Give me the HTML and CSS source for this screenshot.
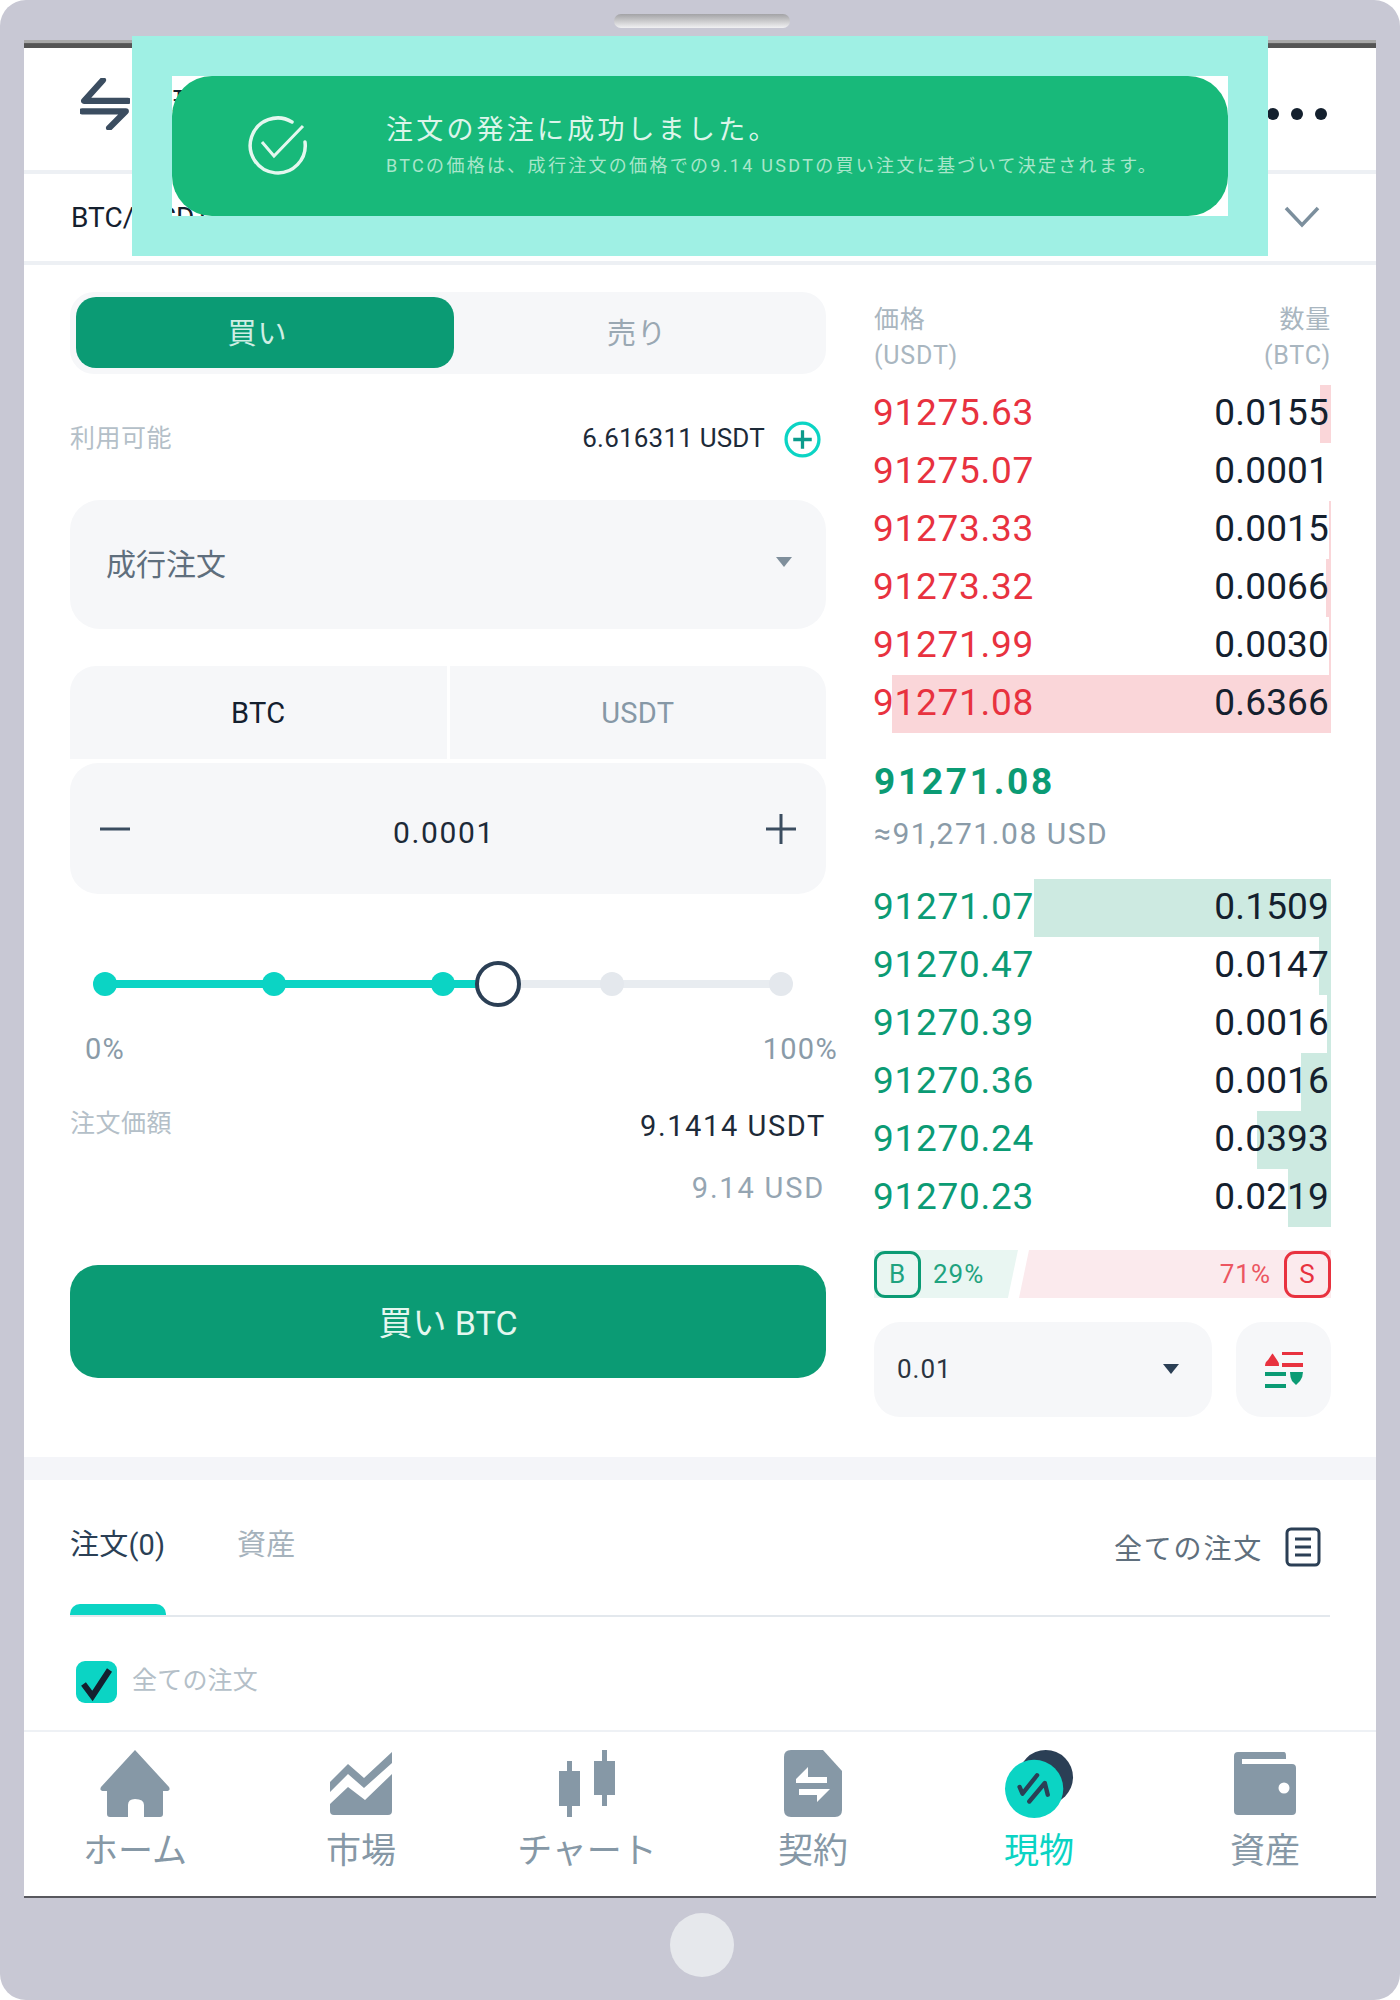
FILE: index.html
```html
<!DOCTYPE html>
<html lang="ja">
<head>
<meta charset="utf-8">
<title>現物注文</title>
<link rel="stylesheet" href="styles.css">
</head>
<body>
<div class="device">
  <div class="speaker"></div>
  <div class="screen">
    <div class="statusbar"></div>
    <header class="topbar">
      <svg class="swap-icon" viewBox="0 0 48 50" aria-hidden="true"><path d="M22 2 L4 22 H46 M2 32 H44 L28 48" fill="none" stroke="#3b4d60" stroke-width="6" stroke-linecap="round" stroke-linejoin="round"/></svg>
      <span class="top-title">現物</span>
      <div class="dots"><i></i><i></i><i></i></div>
    </header>
    <div class="pairbar">
      <span class="pair">BTC/ USDT</span>
      <svg class="chev" viewBox="0 0 36 22" aria-hidden="true"><path d="M2 2 L18 19 L34 2" fill="none" stroke="#7c8f9d" stroke-width="3.5"/></svg>
    </div>
    <main class="trade">
      <section class="form">
        <div class="side">
          <div class="side-btn on">買い</div>
          <div class="side-btn">売り</div>
        </div>
        <div class="balance">
          <span class="label">利用可能</span>
          <span class="bal-right">
            <span class="bal-val">6.616311 USDT</span>
            <svg class="plus-c" viewBox="0 0 36 36" aria-hidden="true"><circle cx="18" cy="18" r="16" fill="none" stroke="#0bd4c4" stroke-width="3.2"/><path d="M18 9 V27 M9 18 H27" stroke="#0b9b8c" stroke-width="3.2"/></svg>
          </span>
        </div>
        <div class="select">
          <span>成行注文</span>
          <i class="caret"></i>
        </div>
        <div class="unit">
          <div class="unit-btn on">BTC</div>
          <div class="unit-btn">USDT</div>
        </div>
        <div class="qty-input">
          <svg class="pm" viewBox="0 0 30 30" aria-hidden="true"><path d="M0 15 H30" stroke="#3b4d60" stroke-width="3"/></svg>
          <span>0.0001</span>
          <svg class="pm" viewBox="0 0 30 30" aria-hidden="true"><path d="M0 15 H30 M15 0 V30" stroke="#3b4d60" stroke-width="3"/></svg>
        </div>
        <div class="slider">
          <div class="track"><div class="track-fill"></div></div>
          <i class="dot on"></i><i class="dot on"></i><i class="dot on"></i><i class="dot"></i><i class="dot"></i>
          <i class="thumb"></i>
        </div>
        <div class="pct"><span>0%</span><span>100%</span></div>
        <div class="total">
          <span class="label total-label">注文価額</span>
          <span class="total-val">9.1414 USDT</span>
        </div>
        <div class="total-usd">9.14 USD</div>
        <div class="buy">買い BTC</div>
      </section>
      <section class="book">
        <div class="book-head">
          <div><div>価格</div><div>(USDT)</div></div>
          <div class="r"><div>数量</div><div>(BTC)</div></div>
        </div>
        <div class="rows">
          <div class="row ask"><i class="bar" style="width:11px"></i><span class="p">91275.63</span><span class="q">0.0155</span></div>
          <div class="row ask"><span class="p">91275.07</span><span class="q">0.0001</span></div>
          <div class="row ask"><i class="bar" style="width:2px"></i><span class="p">91273.33</span><span class="q">0.0015</span></div>
          <div class="row ask"><i class="bar" style="width:5px"></i><span class="p">91273.32</span><span class="q">0.0066</span></div>
          <div class="row ask"><i class="bar" style="width:2px"></i><span class="p">91271.99</span><span class="q">0.0030</span></div>
          <div class="row ask"><i class="bar" style="width:439px"></i><span class="p">91271.08</span><span class="q">0.6366</span></div>
        </div>
        <div class="last">91271.08</div>
        <div class="last-usd">≈91,271.08 USD</div>
        <div class="rows">
          <div class="row bid"><i class="bar" style="width:297px"></i><span class="p">91271.07</span><span class="q">0.1509</span></div>
          <div class="row bid"><i class="bar" style="width:12px"></i><span class="p">91270.47</span><span class="q">0.0147</span></div>
          <div class="row bid"><i class="bar" style="width:4px"></i><span class="p">91270.39</span><span class="q">0.0016</span></div>
          <div class="row bid"><i class="bar" style="width:30px"></i><span class="p">91270.36</span><span class="q">0.0016</span></div>
          <div class="row bid"><i class="bar" style="width:74px"></i><span class="p">91270.24</span><span class="q">0.0393</span></div>
          <div class="row bid"><i class="bar" style="width:43px"></i><span class="p">91270.23</span><span class="q">0.0219</span></div>
        </div>
        <div class="ratio">
          <div class="ratio-b"><b class="tag">B</b><span>29%</span></div>
          <div class="ratio-s"><span>71%</span><b class="tag">S</b></div>
        </div>
        <div class="book-tools">
          <div class="depth"><span>0.01</span><i class="caret dark"></i></div>
          <div class="sort">
            <svg viewBox="0 0 38 36" aria-hidden="true">
              <path d="M0 14 Q0 10 3 8 L7 2 Q7.500 1 8 2 L12 8 Q14 10 14 14 Z" fill="#e8323f"/>
              <path d="M17 1 H38 M17 13 H38" stroke="#e8323f" stroke-width="4"/>
              <path d="M0 22 H21 M0 34 H21" stroke="#0b9b74" stroke-width="4"/>
              <path d="M25 20 H38 Q38 25 35 29 L31 33 L27 29 Q25 25 25 20 Z" fill="#0b9b74"/>
            </svg>
          </div>
        </div>
      </section>
    </main>
    <div class="band"></div>
    <section class="orders">
      <div class="o-tabs">
        <div class="o-tab on"><span>注文(0)</span></div>
        <div class="o-tab"><span>資産</span></div>
        <div class="o-all">
          <span>全ての注文</span>
          <svg viewBox="0 0 36 40" aria-hidden="true"><rect x="2" y="2" width="32" height="36" rx="4" fill="none" stroke="#2b3f55" stroke-width="3"/><path d="M10 12 H26 M10 20 H26 M10 28 H26" stroke="#2b3f55" stroke-width="3"/></svg>
        </div>
      </div>
      <div class="o-filter">
        <span class="check"><svg viewBox="0 0 40 42" aria-hidden="true"><path d="M7 23 L16 35 L33 9" fill="none" stroke="#14202e" stroke-width="6"/></svg></span>
        <span class="filter-label">全ての注文</span>
      </div>
    </section>
    <nav class="nav">
      <div class="nav-item">
        <svg width="70" height="68" viewBox="0 0 70 68" aria-hidden="true"><path d="M35 0 L69 37 Q71 41 66 41 H63 V64 Q63 67 60 67 H44 V55 Q44 49 35 49 Q28 49 28 55 V67 H10 Q7 67 7 64 V41 H4 Q-1 41 1 37 Z" fill="#8698a6"/></svg>
        <span>ホーム</span>
      </div>
      <div class="nav-item">
        <svg width="62" height="64" viewBox="0 0 62 64" aria-hidden="true"><path d="M0 30 L18 12 L34 26 L62 0 V11 L34 36 L18 22 L0 40 Z M0 52 L18 35 L35 48 L62 22 V59 Q62 63 58 63 H4 Q0 63 0 59 Z" fill="#8698a6"/></svg>
        <span>市場</span>
      </div>
      <div class="nav-item">
        <svg width="56" height="68" viewBox="0 0 56 68" aria-hidden="true"><path d="M8 11 H13 V21 H21 V56 H13 V67 H8 V56 H0 V21 H8 Z M43 0 H48 V11 H56 V45 H48 V56 H43 V45 H35 V11 H43 Z" fill="#8698a6"/></svg>
        <span>チャート</span>
      </div>
      <div class="nav-item">
        <svg width="58" height="68" viewBox="0 0 58 68" aria-hidden="true"><path d="M7 0 H39 L58 21 V60 Q58 67 51 67 H7 Q0 67 0 60 V7 Q0 0 7 0 Z" fill="#8698a6"/><path d="M24 17 L12 29 V33 H43 V27 H24 Z M15 39 V45 H33 V52 L46 39 Z" fill="#fff"/></svg>
        <span>契約</span>
      </div>
      <div class="nav-item active">
        <svg width="70" height="70" viewBox="0 0 70 70" aria-hidden="true"><circle cx="42" cy="28" r="28" fill="#2b3f55"/><circle cx="30" cy="40" r="30" fill="#0bd4c4"/><path d="M15 38 L18 45 L33 26 M25 53 L41 34 L44 46" fill="none" stroke="#2b3f55" stroke-width="4.500" stroke-linecap="round" stroke-linejoin="round"/></svg>
        <span>現物</span>
      </div>
      <div class="nav-item">
        <svg width="62" height="64" viewBox="0 0 62 64" aria-hidden="true"><path d="M4 0 H50 Q52 0 52 4 V7 H8 V12 H58 Q62 12 62 16 V59 Q62 63 58 63 H4 Q0 63 0 59 V4 Q0 0 4 0 Z" fill="#8698a6"/><circle cx="50" cy="36" r="5.500" fill="#fff"/></svg>
        <span>資産</span>
      </div>
    </nav>
  </div>
  <div class="home"></div>
  <div class="toast">
    <div class="toast-pill">
      <svg class="toast-check" viewBox="0 0 60 60" aria-hidden="true"><path d="M44 6 A27.500 27.500 0 1 0 57 26" fill="none" stroke="#e4f7ef" stroke-width="3.500" stroke-linecap="round"/><path d="M14 26 L26 40 L55 10" fill="none" stroke="#e4f7ef" stroke-width="3"/></svg>
      <div class="toast-text">
        <div class="toast-title">注文の発注に成功しました。</div>
        <div class="toast-sub">BTCの価格は、成行注文の価格での9.14 USDTの買い注文に基づいて決定されます。</div>
      </div>
    </div>
  </div>
</div>
</body>
</html>
```
FILE: styles.css
```css
* { box-sizing: border-box; }
html, body { margin: 0; padding: 0; }
body { font-family: Roboto, "Noto Sans CJK JP", sans-serif; background: #fff; color: #14202e; }
i, b { font-style: normal; font-weight: 400; }

.device { position: relative; width: 1400px; height: 2000px; padding-top: 14px; background: #c8c8d4; border-radius: 26px; }
.speaker { width: 176px; height: 14px; margin-left: 614px; border-radius: 7px; background: linear-gradient(#a3a3a6, #f1f1f3); }
.screen { display: flex; flex-direction: column; height: 1858px; margin: 12px 24px 0; overflow: hidden; background: #fff; border-bottom: 2px solid #58585e; }
.statusbar { height: 8px; flex: none; background: linear-gradient(#a8a8a8, #a8a8a8 35%, #555 45%, #555); }
.home { width: 64px; height: 64px; margin: 15px 0 0 670px; border-radius: 50%; background: #e6e8ec; }

.topbar { display: flex; align-items: center; flex: none; height: 126px; padding: 0 49px 0 56px; border-bottom: 4px solid #edf0f4; }
.swap-icon { width: 50px; height: 52px; margin-bottom: 10px; }
.top-title { margin: 0 0 16px 42px; font-size: 30px; }
.dots { display: flex; gap: 12px; margin: 10px 0 0 auto; }
.dots i { width: 12px; height: 12px; border-radius: 50%; background: #14202e; }
.pairbar { display: flex; align-items: center; justify-content: space-between; flex: none; height: 91px; padding: 0 56px 1px 47px; border-bottom: 4px solid #edf0f4; }
.pair { font-size: 28px; }
.chev { width: 36px; height: 22px; }

.trade { display: flex; flex: none; height: 1192px; gap: 48px; padding: 27px 45px 0 46px; }
.form { width: 756px; flex: none; }
.book { flex: 1; min-width: 0; padding-top: 10px; }

.side { display: flex; height: 82px; padding: 5px 0 6px 6px; border-radius: 24px; background: #f6f7f9; }
.side-btn { display: flex; align-items: center; justify-content: center; flex: 1; padding-bottom: 3px; font-size: 29px; letter-spacing: 1px; color: #9aa8b3; }
.side-btn.on { flex: none; width: 378px; padding-right: 15px; border-radius: 20px; background: #0b9b74; color: #cfeee4; }
.side-btn:not(.on) { padding-right: 6px; }

.balance { display: flex; align-items: center; justify-content: space-between; height: 50px; margin: 39px 0 37px; padding-right: 5px; }
.label { margin-top: -5px; font-size: 25px; letter-spacing: .5px; color: #b4bfc8; }
.total-label { margin-top: -6px; }
.bal-right { display: flex; align-items: center; gap: 19px; }
.bal-val { font-size: 26px; letter-spacing: .2px; color: #1d2a38; }
.plus-c { width: 37px; height: 37px; margin-top: 3px; }

.select { display: flex; align-items: center; justify-content: space-between; height: 129px; padding: 0 34px 5px 36px; border-radius: 30px; background: #f6f7f9; font-size: 30px; color: #5f6f7d; }
.caret { width: 0; height: 0; border-left: 8px solid transparent; border-right: 8px solid transparent; border-top: 10px solid #7f8f9c; }
.caret.dark { border-top-color: #2b3f55; }

.unit { display: flex; gap: 3px; margin-top: 37px; height: 93px; }
.unit-btn { display: flex; align-items: center; justify-content: center; flex: 1; background: #f6f7f9; font-size: 29px; letter-spacing: .3px; color: #8698a6; }
.unit-btn:first-child { border-top-left-radius: 26px; }
.unit-btn:last-child { border-top-right-radius: 26px; }
.unit-btn.on { color: #14202e; }
.qty-input { display: flex; align-items: center; justify-content: space-between; height: 131px; margin-top: 4px; padding: 4px 30px 0; border-radius: 28px; background: #f6f7f9; font-size: 30px; letter-spacing: 1.600px; color: #1d2a38; }
.qty-input span { margin-left: -8px; margin-top: 4px; }
.pm { width: 30px; height: 30px; margin-top: -4px; }

.slider { position: relative; display: flex; align-items: center; justify-content: space-between; height: 44px; margin: 68px 33px 0 23px; }
.track { position: absolute; left: 12px; right: 12px; top: 18px; height: 8px; background: #e8ecf0; }
.track-fill { width: 58.100%; height: 100%; background: #0bd4c4; }
.dot { position: relative; width: 24px; height: 24px; border-radius: 50%; background: #e4e8ed; }
.dot.on { background: #0bd4c4; }
.thumb { position: absolute; left: 382px; top: -1px; width: 46px; height: 46px; border: 4px solid #2b3f55; border-radius: 50%; background: #fff; }
.pct { display: flex; justify-content: space-between; margin: 23px -12px 0 15px; font-size: 29px; line-height: 40px; letter-spacing: 1.300px; color: #8a9ba8; }
.total { display: flex; align-items: center; justify-content: space-between; margin-top: 35px; height: 40px; }
.total-val { font-size: 29px; letter-spacing: 1.600px; margin-top: 3px; color: #1d2a38; }
.total-usd { margin: 24px 1px 0 0; text-align: right; font-size: 29px; line-height: 40px; letter-spacing: 1.800px; color: #95a5b2; }
.buy { display: flex; align-items: center; justify-content: center; height: 113px; margin-top: 57px; padding-bottom: 2px; border-radius: 28px; background: #0b9b74; font-size: 34px; color: #e4f7ef; }

.book-head { display: flex; justify-content: space-between; font-size: 25px; line-height: 36px; letter-spacing: .8px; color: #a9b6c0; }
.book-head .r { text-align: right; }
.rows { margin-top: 11px; }
.row { position: relative; display: flex; align-items: center; justify-content: space-between; height: 58px; padding: 0 2px 3px 0; font-size: 37px; }
.row .p, .row .q { position: relative; }
.row .p { margin-left: -1px; letter-spacing: .7px; }
.row .q { letter-spacing: .15px; color: #14202e; }
.bar { position: absolute; right: 0; top: 0; height: 100%; }
.ask .p { color: #e8323f; }
.ask .bar { background: #fad6d9; }
.bid .p { color: #0b9b74; }
.bid .bar { background: #cdeae1; }
.last { margin-top: 22px; font-size: 37px; font-weight: 700; line-height: 54px; letter-spacing: 2.700px; color: #0b9b74; }
.last-usd { font-size: 30px; line-height: 50px; letter-spacing: 1.500px; color: #8a9ba8; }
.last-usd + .rows { margin-top: 20px; }

.ratio { display: flex; gap: 1px; height: 48px; margin-top: 23px; font-size: 26px; letter-spacing: 1px; }
.ratio-b, .ratio-s { display: flex; align-items: center; height: 48px; }
.ratio-b { flex: none; width: 144px; gap: 12px; background: #e9f6f2; color: #1fa37f; clip-path: polygon(0 0, 100% 0, 93% 100%, 0 100%); }
.ratio-s { flex: 1; justify-content: flex-end; gap: 13px; background: #fbeaed; color: #ec5661; clip-path: polygon(10px 0, 100% 0, 100% 100%, 0 100%); }
.tag { display: flex; align-items: center; justify-content: center; width: 47px; height: 47px; border: 3px solid #0b9b74; border-radius: 11px; }
.ratio-s .tag { border-color: #e8323f; color: #e8323f; }

.book-tools { display: flex; gap: 24px; height: 95px; margin-top: 24px; }
.depth { display: flex; align-items: center; justify-content: space-between; width: 338px; padding: 0 33px 2px 23px; border-radius: 26px; background: #f6f7f9; font-size: 26px; letter-spacing: 1px; color: #2b3440; }
.sort { display: flex; align-items: center; justify-content: center; flex: 1; border-radius: 26px; background: #f6f7f9; }
.sort svg { width: 38px; height: 36px; }

.band { flex: none; height: 23px; background: #f4f5f9; }

.orders { flex: 1; padding: 0 46px; }
.o-tabs { display: flex; height: 137px; border-bottom: 2px solid #e3e8ed; }
.o-tab { position: relative; padding-top: 41px; font-size: 29px; letter-spacing: .2px; color: #a5b2bc; margin-right: 71px; }
.o-tab.on { width: 96px; color: #2b3f55; }
.o-tab.on::after { content: ""; position: absolute; left: 0; right: 0; bottom: 0; height: 11px; border-radius: 10px 10px 0 0; background: #0bd4c4; }
.o-all { display: flex; align-items: flex-start; gap: 22px; margin-left: auto; padding: 47px 9px 0 0; font-size: 28px; letter-spacing: 1.800px; color: #5f6f7d; }
.o-all svg { width: 36px; height: 40px; }
.o-filter { display: flex; align-items: center; gap: 15px; margin-top: 44px; padding-left: 6px; font-size: 25px; letter-spacing: .2px; color: #b4bfc8; }
.filter-label { margin-top: -8px; }
.check { display: block; width: 41px; height: 42px; border-radius: 9px; background: #0bd4c4; }
.check svg { display: block; width: 41px; height: 42px; }

.nav { display: grid; grid-template-columns: repeat(6, 1fr); flex: none; height: 166px; margin: 0 -2px; padding-top: 18px; border-top: 2px solid #eef1f5; }
.nav-item { display: flex; flex-direction: column; align-items: center; font-size: 35px; line-height: 40px; color: #8698a6; }
.nav-item svg { display: block; height: 68px; margin-bottom: 14px; }
.nav-item.active { color: #0bd4c4; }

.toast { position: absolute; left: 132px; top: 36px; width: 1136px; height: 220px; border: 40px solid #9ff0e4; }
.toast-pill { display: flex; align-items: center; height: 140px; border-radius: 40px; background: #18b97a; }
.toast-check { width: 60px; height: 60px; margin: 0 78px 0 76px; flex: none; }
.toast-title { font-size: 27px; line-height: 36px; letter-spacing: 3.200px; color: #dcf5ea; }
.toast-sub { margin-top: 4px; font-size: 18px; line-height: 28px; letter-spacing: 2.300px; color: #a8e6cb; }
```
